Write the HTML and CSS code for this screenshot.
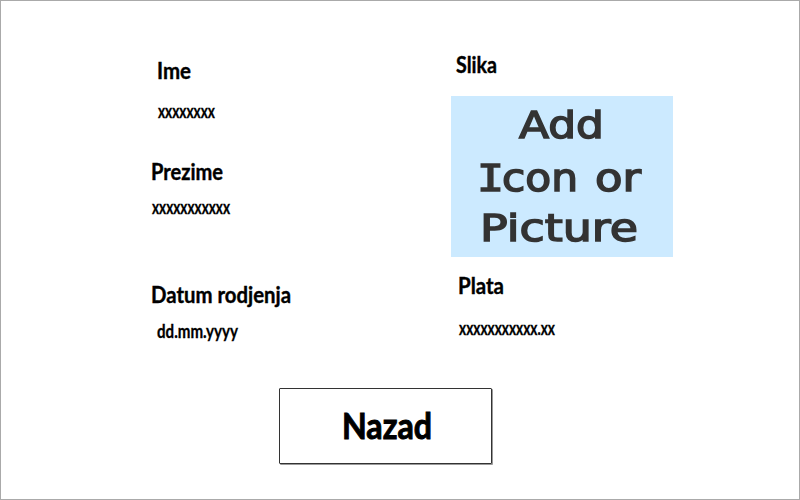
FILE: index.html
```
<!DOCTYPE html>
<html lang="sr">
<head><meta charset="utf-8"><title>Radnik</title><link rel="stylesheet" href="styles.css"></head>
<body>
<main class="window">
  <div class="details">
    <section class="column">
      <div class="field ime">
        <svg class="label" role="heading" aria-level="2"><text x="6" y="20" textLength="34" lengthAdjust="spacingAndGlyphs">Ime</text></svg>
        <svg class="value"><text x="7" y="20" textLength="57" lengthAdjust="spacingAndGlyphs">xxxxxxxx</text></svg>
      </div>
      <div class="field prezime">
        <svg class="label" role="heading" aria-level="2"><text x="0" y="20" textLength="72" lengthAdjust="spacingAndGlyphs">Prezime</text></svg>
        <svg class="value"><text x="1" y="20" textLength="78" lengthAdjust="spacingAndGlyphs">xxxxxxxxxxx</text></svg>
      </div>
      <div class="field datum">
        <svg class="label" role="heading" aria-level="2"><text x="0" y="20" textLength="140" lengthAdjust="spacingAndGlyphs">Datum rodjenja</text></svg>
        <svg class="value"><text x="6" y="20" textLength="81" lengthAdjust="spacingAndGlyphs">dd.mm.yyyy</text></svg>
      </div>
    </section>
    <section class="column">
      <div class="field slika">
        <svg class="label" role="heading" aria-level="2"><text x="5" y="20" textLength="41" lengthAdjust="spacingAndGlyphs">Slika</text></svg>
        <svg class="picture" viewBox="0 0 222 161">
          <text x="68" y="42" textLength="85" lengthAdjust="spacingAndGlyphs">Add</text>
          <text class="capital" x="26" y="94.5" textLength="27" lengthAdjust="spacingAndGlyphs">I</text>
          <text x="51" y="94.5" textLength="76" lengthAdjust="spacingAndGlyphs">con</text>
          <text x="144" y="94.5" textLength="46" lengthAdjust="spacingAndGlyphs">or</text>
          <text x="29" y="145" textLength="158" lengthAdjust="spacingAndGlyphs">Picture</text>
        </svg>
      </div>
      <div class="field plata">
        <svg class="label" role="heading" aria-level="2"><text x="7" y="20" textLength="46" lengthAdjust="spacingAndGlyphs">Plata</text></svg>
        <svg class="value"><text x="8" y="20" textLength="96" lengthAdjust="spacingAndGlyphs">xxxxxxxxxxx.xx</text></svg>
      </div>
    </section>
  </div>
  <button class="back"><svg class="caption"><text x="62" y="50" textLength="90" lengthAdjust="spacingAndGlyphs">Nazad</text></svg></button>
</main>
</body>
</html>
```
FILE: styles.css
```
* { box-sizing: border-box; }
body { margin: 0; background: #fff; }
.window { width: 800px; height: 500px; border: 1px solid #aaa; overflow: hidden; }
.details { display: grid; grid-template-columns: 300px 250px; height: 387px; padding: 52px 0 0 150px; }
.field { display: flex; flex-direction: column; }
.label, .value { display: block; width: 240px; height: 28px; overflow: visible; fill: #000; stroke: #000; font-family: Lato, sans-serif; }
.label { font-size: 23px; font-weight: 700; stroke-width: .4px; }
.value { font-size: 18px; font-weight: 700; stroke-width: .3px; }
.ime { padding-top: 6px; gap: 11px; }
.prezime { padding-top: 34px; gap: 6px; }
.datum { padding-top: 61px; gap: 7px; }
.slika { gap: 15px; }
.plata { padding-top: 17px; gap: 13px; }
.picture { display: block; width: 222px; height: 161px; background: #cceaff; fill: #333; stroke: #333; stroke-width: 1.5px; font: 38px "DejaVu Sans", sans-serif; }
.picture text { filter: blur(.7px); }
.picture .capital { font-family: "DejaVu Sans Mono", monospace; }
.back { display: block; width: 213px; height: 76px; margin-left: 278px; padding: 0; border: 1px solid #333; border-radius: 1px; background: #fff; box-shadow: 1px 1px 0 #999; overflow: visible; }
.caption { display: block; width: 211px; height: 74px; font: 700 37px Lato, sans-serif; stroke: #000; stroke-width: 1px; }
```
